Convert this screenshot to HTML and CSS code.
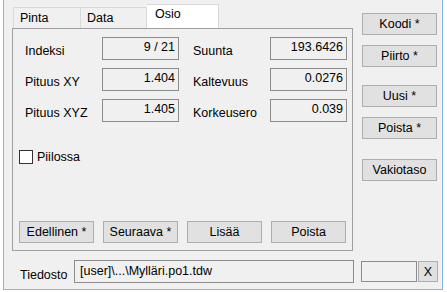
FILE: index.html
```html
<!DOCTYPE html>
<html lang="fi">
<head>
    <meta charset="UTF-8">
    <title>Osio</title>
    <link rel="stylesheet" href="styles.css">
</head>
<body>

    <div class="window">
        <div class="main">
            <div class="left">
                <div class="tabs">
                    <div class="tab tab-first">Pinta</div>
                    <div class="tab">Data</div>
                    <div class="tab active">Osio</div>
                </div>

                <div class="panel">
                    <div class="values">
                        <span class="label">Indeksi</span>
                        <span class="field">9 / 21</span>
                        <span class="label">Suunta</span>
                        <span class="field">193.6426</span>

                        <span class="label">Pituus XY</span>
                        <span class="field">1.404</span>
                        <span class="label">Kaltevuus</span>
                        <span class="field">0.0276</span>

                        <span class="label">Pituus XYZ</span>
                        <span class="field">1.405</span>
                        <span class="label">Korkeusero</span>
                        <span class="field">0.039</span>
                    </div>

                    <label class="check"><span class="box"></span>Piilossa</label>

                    <div class="nav">
                        <button class="btn">Edellinen *</button>
                        <button class="btn">Seuraava *</button>
                        <button class="btn">Lisää</button>
                        <button class="btn">Poista</button>
                    </div>
                </div>
            </div>

            <div class="side">
                <button class="btn">Koodi *</button>
                <button class="btn btn-piirto">Piirto *</button>
                <button class="btn btn-uusi">Uusi *</button>
                <button class="btn btn-poista">Poista *</button>
                <button class="btn btn-vakio">Vakiotaso</button>
            </div>
        </div>

        <div class="file-row">
            <span class="file-label">Tiedosto</span>
            <span class="file-field">[user]\...\Mylläri.po1.tdw</span>
            <span class="small-field"></span>
            <button class="btn btn-x">X</button>
        </div>
    </div>

</body>
</html>
```

FILE: styles.css
```css
body {
    margin: 0;
    background: #fff;
    font-family: "Liberation Sans", Arial, sans-serif;
    font-size: 12.5px;
    line-height: 14px;
    color: #000;
}

.window {
    box-sizing: border-box;
    width: 440px;
    height: 290px;
    margin-left: 3px;
    padding: 4px 0 0 8px;
    background: #f0f0f0;
    border: 1px solid #86b5e6;
    border-top: none;
}

.main {
    display: flex;
    gap: 9px;
}

.left {
    width: 341px;
}

/* tabs */
.tabs {
    display: flex;
    align-items: flex-end;
    height: 24px;
    padding-left: 1px;
}

.tab {
    box-sizing: border-box;
    height: 21px;
    width: 66px;
    padding: 3px 0 0 6px;
    border: 1px solid #d9d9d9;
    border-bottom: none;
    border-left: none;
}

.tab-first {
    width: 68px;
    border-left: 1px solid #d9d9d9;
}

.tab.active {
    height: 24px;
    width: 72px;
    padding: 2px 0 0 8px;
    background: #fff;
    border-color: #d9d9d9;
}

.panel {
    box-sizing: border-box;
    height: 223px;
    display: flex;
    flex-direction: column;
    padding: 8px 6px 7px 6px;
    border: 1px solid #a0a0a0;
}

.values {
    display: grid;
    grid-template-columns: 77px 91px 77px 77px;
    grid-auto-rows: 23px;
    row-gap: 8px;
    margin-left: 6px;
}

.label {
    align-self: end;
    padding-bottom: 2px;
}

.field {
    box-sizing: border-box;
    width: 77px;
    padding: 2px 3px 0 0;
    text-align: right;
    border: 1px solid #8c8c8c;
}

.check {
    display: flex;
    align-items: center;
    gap: 4px;
    margin-top: 28px;
}

.box {
    box-sizing: border-box;
    width: 14px;
    height: 14px;
    background: #fff;
    border: 1px solid #333;
}

.nav {
    display: flex;
    gap: 9px;
    margin-top: auto;
}

/* buttons */
.btn {
    box-sizing: border-box;
    width: 75px;
    height: 22px;
    padding: 0;
    font: inherit;
    color: #000;
    background: #e1e1e1;
    border: 1px solid #adadad;
}

.side {
    display: flex;
    flex-direction: column;
    padding-top: 9px;
}

.btn-piirto {
    margin-top: 10px;
}

.btn-uusi {
    margin-top: 18px;
}

.btn-poista {
    margin-top: 10px;
}

.btn-vakio {
    margin-top: 20px;
}

/* file row */
.file-row {
    display: flex;
    margin-top: 9px;
    padding-left: 8px;
}

.file-label {
    align-self: flex-end;
    width: 54px;
    padding-bottom: 1px;
}

.file-field {
    box-sizing: border-box;
    width: 280px;
    height: 23px;
    padding: 3px 0 0 5px;
    border: 1px solid #8c8c8c;
}

.small-field {
    box-sizing: border-box;
    width: 56px;
    height: 21px;
    margin: 1px 1px 0 7px;
    border: 1px solid #8c8c8c;
}

.btn-x {
    width: 20px;
    height: 21px;
    margin-top: 1px;
}
```
